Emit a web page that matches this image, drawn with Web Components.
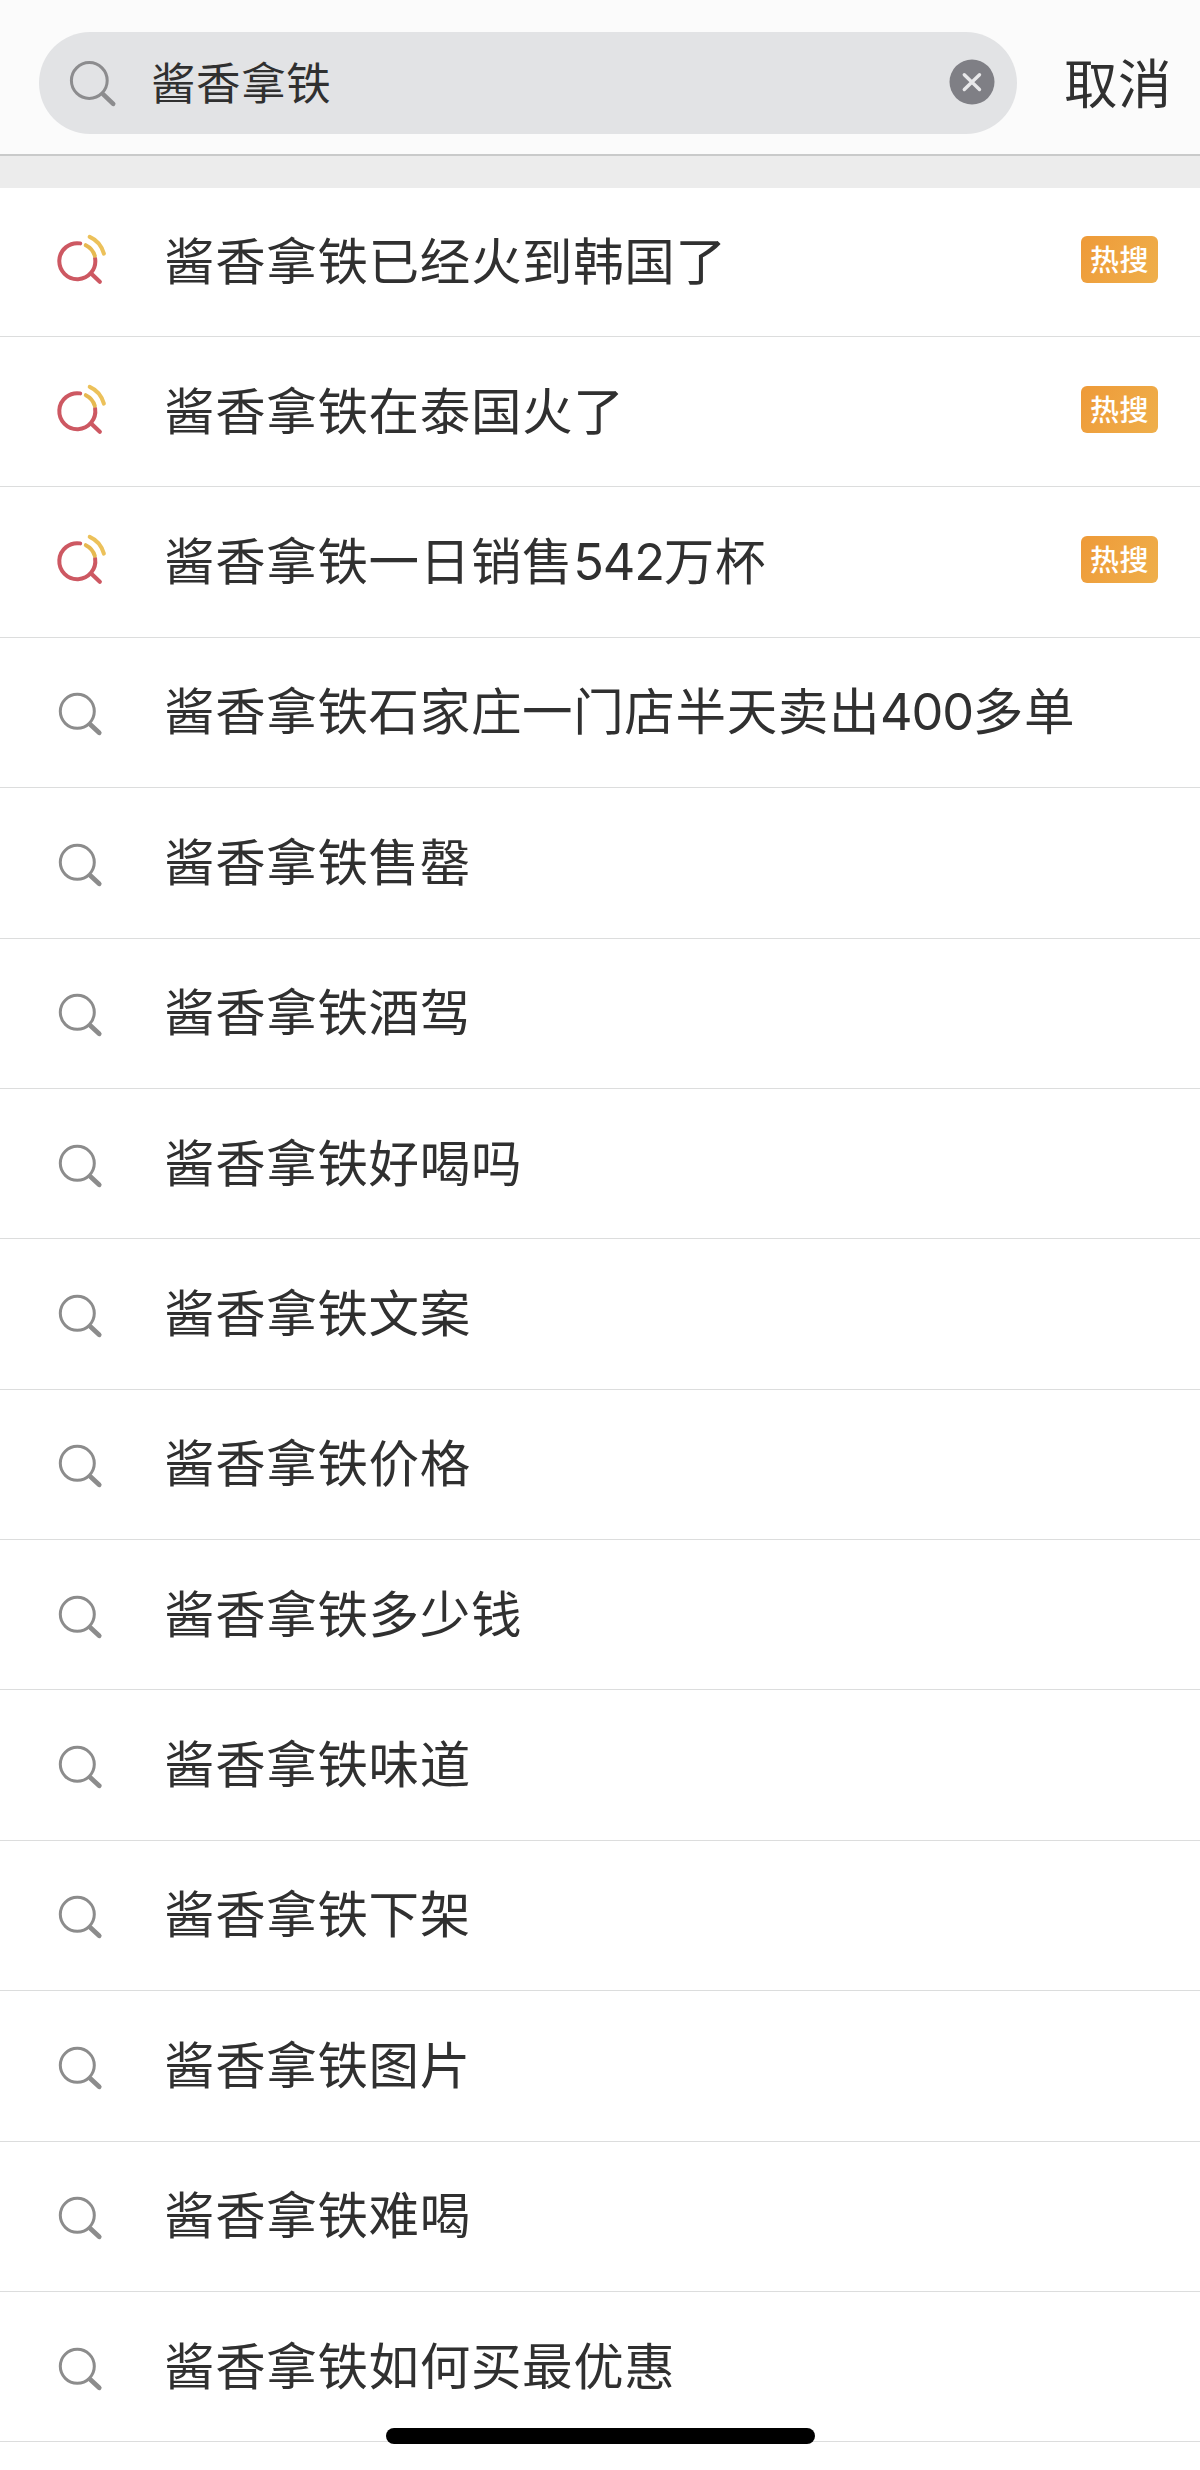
<!DOCTYPE html>
<html lang="zh-CN">
<head>
<meta charset="UTF-8">
<title>搜索</title>
<style>
    :root{
        --text-color: #303030;
        --icon-color: #8c8c8c;
        --line-color: #dcdddd;
    }
    body{
        margin: 0;
        background-color: white;
        color: var(--text-color);
        font-family: "Noto Sans CJK SC", sans-serif;
    }
</style>
</head>
<body>
<search-page></search-page>

<script>
class searchIcon extends HTMLElement {

    constructor(){
        super();
        this.attachShadow({ mode: "open" });
    }
    getStyle(){
        return `
        <style>
            :host{
                display: block;
                flex: none;
                width: 60px;
                height: 60px;
            }
            svg{
                display: block;
                fill: none;
                stroke-linecap: round;
            }
        </style>
        `;
    }
    getIcon(){
        switch (this.getAttribute("type")) {
            case 'hot':
                return `
                <path d="M32.2 11.4A18 18 0 1 0 47.1 26.5" stroke="#cd5862" stroke-width="4"/>
                <path d="M43.4 41.8L51.8 49.8" stroke="#cd5862" stroke-width="4.2"/>
                <path d="M37.8 13.2Q44.6 16.6 46.8 23.8" stroke="#e6b951" stroke-width="4"/>
                <path d="M41.7 4.8Q52.6 9.6 55.9 21.6" stroke="#ecc15a" stroke-width="4"/>`;
            case 'field':
                return `
                <circle cx="29.3" cy="27.5" r="17.9" stroke="#8c8c8e" stroke-width="3"/>
                <path d="M43 41.1L53.2 50.9" stroke="#8c8c8e" stroke-width="4.6"/>`;
            default:
                return `
                <circle cx="29.3" cy="29.3" r="17" stroke="var(--icon-color)" stroke-width="3"/>
                <path d="M42.3 42.6L51.2 50.8" stroke="var(--icon-color)" stroke-width="4.8"/>`;
        }
    }
    connectedCallback(){
        this.shadowRoot.innerHTML = `
        ${this.getStyle()}
        <svg width="60" height="60" viewBox="0 0 60 60">${this.getIcon()}</svg>`;
    }
}
customElements.define('search-icon', searchIcon);

class searchHeader extends HTMLElement {

    constructor(){
        super();
        this.attachShadow({ mode: "open" });
    }
    getStyle(){
        return `
        <style>
            :host{
                display: flex;
                align-items: flex-start;
                box-sizing: border-box;
                height: 156px;
                padding: 32px 0 0 39px;
                background-color: #fbfbfb;
                border-bottom: 2px solid #c9caca;
            }
            .field{
                display: flex;
                align-items: center;
                box-sizing: border-box;
                width: 978px;
                height: 102px;
                padding: 0 22px 0 21px;
                border-radius: 51px;
                background-color: #e2e3e5;
            }
            .query{
                flex: 1;
                margin: 0 0 4px 31px;
                font-size: 44.5px;
                line-height: 60px;
                letter-spacing: .6px;
            }
            .clear{
                display: block;
                margin-bottom: 2px;
            }
            .cancel{
                margin-left: 47px;
                font-size: 53.5px;
                line-height: 98px;
                letter-spacing: .5px;
                white-space: nowrap;
            }
        </style>
        `;
    }
    connectedCallback(){
        this.shadowRoot.innerHTML = `
        ${this.getStyle()}
        <div class="field">
            <search-icon type="field"></search-icon>
            <span class="query"><slot></slot></span>
            <svg class="clear" width="46" height="46" viewBox="0 0 46 46">
                <circle cx="23" cy="23" r="22.5" fill="#7f7f85"/>
                <path d="M15.3 15.7L30.5 30.5M30.5 15.7L15.3 30.5" stroke="#e8e8ea" stroke-width="3.4" stroke-linecap="round"/>
            </svg>
        </div>
        <span class="cancel">取消</span>`;
    }
}
customElements.define('search-header', searchHeader);

class hotBadge extends HTMLElement {

    constructor(){
        super();
        this.attachShadow({ mode: "open" });
    }
    connectedCallback(){
        this.shadowRoot.innerHTML = `
        <style>
            :host{
                display: block;
                flex: none;
                width: 77px;
                height: 47px;
                margin-bottom: 5px;
                border-radius: 6px;
                background: linear-gradient(120deg, #ee9a38, #efaf4b);
                color: white;
                font-size: 29px;
                font-weight: 500;
                line-height: 45px;
                letter-spacing: .5px;
                text-align: center;
            }
        </style>
        <slot></slot>`;
    }
}
customElements.define('hot-badge', hotBadge);

class suggestItem extends HTMLElement {

    constructor(){
        super();
        this.attachShadow({ mode: "open" });
    }
    getStyle(){
        return `
        <style>
            :host{
                display: flex;
                align-items: center;
                box-sizing: border-box;
                padding: 0 42px 0 48px;
                border-bottom: 1px solid var(--line-color);
            }
            .word{
                flex: 1;
                margin-left: 56px;
                font-family: Inter, "Noto Sans CJK SC", sans-serif;
                font-size: 50.5px;
                line-height: 72px;
                letter-spacing: .65px;
                white-space: nowrap;
            }
            ::slotted(.num){
                letter-spacing: -1.2px;
            }
        </style>
        `;
    }
    connectedCallback(){
        const hot = this.hasAttribute("hot");
        this.shadowRoot.innerHTML = `
        ${this.getStyle()}
        <search-icon type="${hot ? "hot" : "normal"}"></search-icon>
        <span class="word"><slot></slot></span>
        ${hot ? "<hot-badge>热搜</hot-badge>" : ""}`;
    }
}
customElements.define('suggest-item', suggestItem);

class searchPage extends HTMLElement {

    constructor(){
        super();
        this.attachShadow({ mode: "open" });
    }
    getStyle(){
        return `
        <style>
            :host{
                display: block;
                position: relative;
                height: 2470px;
                overflow: hidden;
            }
            .band{
                height: 32px;
                background-color: #ececec;
            }
            .list{
                display: grid;
                grid-template-rows: 149px;
                grid-auto-rows: 150.38px;
            }
            .home-bar{
                position: absolute;
                left: 386px;
                bottom: 26px;
                width: 429px;
                height: 16px;
                border-radius: 8px;
                background-color: black;
            }
        </style>
        `;
    }
    connectedCallback(){
        this.shadowRoot.innerHTML = `
        ${this.getStyle()}
        <search-header>酱香拿铁</search-header>
        <div class="band"></div>
        <div class="list">
            <suggest-item hot>酱香拿铁已经火到韩国了</suggest-item>
            <suggest-item hot>酱香拿铁在泰国火了</suggest-item>
            <suggest-item hot>酱香拿铁一日销售<span class="num">542</span>万杯</suggest-item>
            <suggest-item>酱香拿铁石家庄一门店半天卖出<span class="num">400</span>多单</suggest-item>
            <suggest-item>酱香拿铁售罄</suggest-item>
            <suggest-item>酱香拿铁酒驾</suggest-item>
            <suggest-item>酱香拿铁好喝吗</suggest-item>
            <suggest-item>酱香拿铁文案</suggest-item>
            <suggest-item>酱香拿铁价格</suggest-item>
            <suggest-item>酱香拿铁多少钱</suggest-item>
            <suggest-item>酱香拿铁味道</suggest-item>
            <suggest-item>酱香拿铁下架</suggest-item>
            <suggest-item>酱香拿铁图片</suggest-item>
            <suggest-item>酱香拿铁难喝</suggest-item>
            <suggest-item>酱香拿铁如何买最优惠</suggest-item>
        </div>
        <div class="home-bar"></div>`;
    }
}
customElements.define('search-page', searchPage);
</script>
</body>
</html>
